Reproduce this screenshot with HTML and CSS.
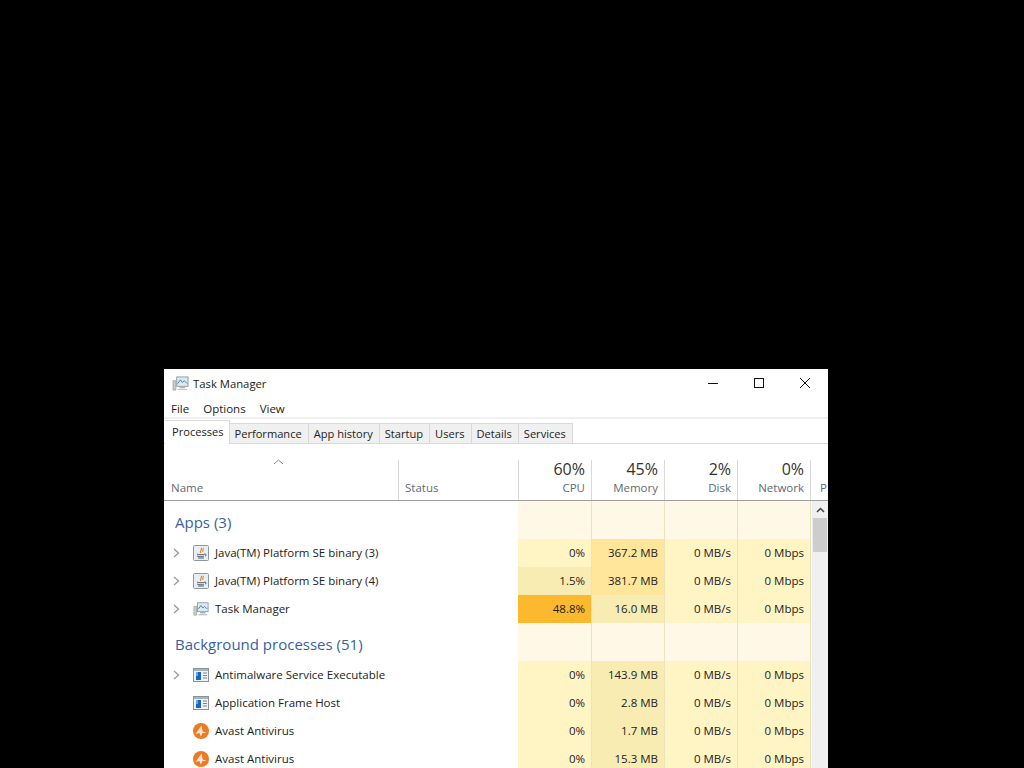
FILE: index.html
```html
<!DOCTYPE html>
<html>
<head>
  <meta charset="utf-8"/>
  <title>Task Manager</title>
  <link rel="stylesheet" href="styles.css">
</head>
<body>
  <svg class="defs" width="0" height="0">
    <symbol id="tm" viewBox="0 0 18 16">
      <rect x="5" y="1" width="12" height="10" fill="#dcebf3" stroke="#8a9aa3"/>
      <path d="M6 8l3-4 2 3 2-2 3 3" fill="none" stroke="#4a7f96"/>
      <path d="M1 5h3v10H1z" fill="#c9cfc9" stroke="#8f9a8f" stroke-width=".7"/>
      <path d="M8 11h6v2H8zM6 14h10v1H6z" fill="#a9b2b6"/>
    </symbol>
    <symbol id="java" viewBox="0 0 16 16">
      <rect x=".5" y=".5" width="15" height="15" rx="1" fill="#e9eef2" stroke="#8d979e"/>
      <path d="M8 3c2 1-2 3 0 5M10 3c1 1-1 2 0 4" fill="none" stroke="#d08a2c" stroke-width="1.1"/>
      <path d="M4 9c2 1 6 1 8 0M4 11c2 1 6 1 7 0M5 13h6M12 9c1.500 0 1.500 2 0 2" fill="none" stroke="#53636e"/>
    </symbol>
    <symbol id="svc" viewBox="0 0 16 14">
      <rect x=".5" y=".5" width="15" height="13" fill="#f1f2f3" stroke="#87929a"/>
      <path d="M1 1h14v2H1z" fill="#a9b3bb"/>
      <path d="M3 4h5v8H3z" fill="#1668c4"/>
      <path d="M3 4h2v4H3z" fill="#6aa6e4"/>
      <path d="M10 5h4M10 7.500h4M10 10h4" stroke="#7b858c"/>
    </symbol>
    <symbol id="avast" viewBox="0 0 16 16">
      <circle cx="8" cy="8" r="8" fill="#ee7a24"/>
      <path d="M2.500 11L8.500 2.500l1.200 6 3.800 1.200-4.300.6-1.200 3.500-1.500-3.800z" fill="#fbe6d4"/>
    </symbol>
  </svg>

  <div class="window">
    <div class="titlebar">
      <svg class="title-icon"><use href="#tm"/></svg>
      <span class="title-text">Task Manager</span>
      <div class="controls">
        <svg width="12" height="12" viewBox="0 0 12 12"><path d="M1 6.500h10" stroke="#111"/></svg>
        <svg width="12" height="12" viewBox="0 0 12 12"><rect x="1.500" y="1.500" width="9" height="9" fill="none" stroke="#111"/></svg>
        <svg width="12" height="12" viewBox="0 0 12 12"><path d="M1 1l10 10M11 1L1 11" stroke="#111"/></svg>
      </div>
    </div>

    <div class="menubar">
      <span>File</span>
      <span>Options</span>
      <span>View</span>
    </div>

    <div class="tabs">
      <span class="tab active">Processes</span>
      <span class="tab">Performance</span>
      <span class="tab">App history</span>
      <span class="tab">Startup</span>
      <span class="tab">Users</span>
      <span class="tab">Details</span>
      <span class="tab">Services</span>
    </div>

    <div class="table">
      <div class="head">
        <div class="hcell name-head">
          <svg class="sort" width="11" height="6" viewBox="0 0 11 6"><path d="M1 5l4.500-4L10 5" fill="none" stroke="#8a8a8a"/></svg>
          <span class="hlabel">Name</span>
        </div>
        <div class="hcell status-head"><span class="hlabel">Status</span></div>
        <div class="hcell num"><span class="pct">60%</span><span class="hlabel">CPU</span></div>
        <div class="hcell num"><span class="pct">45%</span><span class="hlabel">Memory</span></div>
        <div class="hcell num"><span class="pct">2%</span><span class="hlabel">Disk</span></div>
        <div class="hcell num"><span class="pct">0%</span><span class="hlabel">Network</span></div>
        <div class="hcell power"><span class="hlabel">P</span></div>
      </div>

      <div class="row group">
        <div class="name group-name">Apps (3)</div>
        <div class="status"></div>
        <div class="cell"></div><div class="cell"></div><div class="cell"></div><div class="cell"></div>
      </div>
      <div class="row">
        <div class="name"><svg class="chev" width="7" height="10" viewBox="0 0 7 10"><path d="M1 1l4.500 4L1 9" fill="none" stroke="#9a9a9a" stroke-width="1.300"/></svg><svg class="icon"><use href="#java"/></svg><span>Java(TM) Platform SE binary (3)</span></div>
        <div class="status"></div>
        <div class="cell h1">0%</div><div class="cell h3">367.2 MB</div><div class="cell h1">0 MB/s</div><div class="cell h1">0 Mbps</div>
      </div>
      <div class="row">
        <div class="name"><svg class="chev" width="7" height="10" viewBox="0 0 7 10"><path d="M1 1l4.500 4L1 9" fill="none" stroke="#9a9a9a" stroke-width="1.300"/></svg><svg class="icon"><use href="#java"/></svg><span>Java(TM) Platform SE binary (4)</span></div>
        <div class="status"></div>
        <div class="cell h2">1.5%</div><div class="cell h3">381.7 MB</div><div class="cell h1">0 MB/s</div><div class="cell h1">0 Mbps</div>
      </div>
      <div class="row">
        <div class="name"><svg class="chev" width="7" height="10" viewBox="0 0 7 10"><path d="M1 1l4.500 4L1 9" fill="none" stroke="#9a9a9a" stroke-width="1.300"/></svg><svg class="icon"><use href="#tm"/></svg><span>Task Manager</span></div>
        <div class="status"></div>
        <div class="cell hot">48.8%</div><div class="cell h2">16.0 MB</div><div class="cell h1">0 MB/s</div><div class="cell h1">0 Mbps</div>
      </div>

      <div class="row group">
        <div class="name group-name">Background processes (51)</div>
        <div class="status"></div>
        <div class="cell"></div><div class="cell"></div><div class="cell"></div><div class="cell"></div>
      </div>
      <div class="row">
        <div class="name"><svg class="chev" width="7" height="10" viewBox="0 0 7 10"><path d="M1 1l4.500 4L1 9" fill="none" stroke="#9a9a9a" stroke-width="1.300"/></svg><svg class="icon"><use href="#svc"/></svg><span>Antimalware Service Executable</span></div>
        <div class="status"></div>
        <div class="cell h1">0%</div><div class="cell h2">143.9 MB</div><div class="cell h1">0 MB/s</div><div class="cell h1">0 Mbps</div>
      </div>
      <div class="row">
        <div class="name"><span class="chev-space"></span><svg class="icon"><use href="#svc"/></svg><span>Application Frame Host</span></div>
        <div class="status"></div>
        <div class="cell h1">0%</div><div class="cell h2">2.8 MB</div><div class="cell h1">0 MB/s</div><div class="cell h1">0 Mbps</div>
      </div>
      <div class="row">
        <div class="name"><span class="chev-space"></span><svg class="icon"><use href="#avast"/></svg><span>Avast Antivirus</span></div>
        <div class="status"></div>
        <div class="cell h1">0%</div><div class="cell h2">1.7 MB</div><div class="cell h1">0 MB/s</div><div class="cell h1">0 Mbps</div>
      </div>
      <div class="row">
        <div class="name"><span class="chev-space"></span><svg class="icon"><use href="#avast"/></svg><span>Avast Antivirus</span></div>
        <div class="status"></div>
        <div class="cell h1">0%</div><div class="cell h2">15.3 MB</div><div class="cell h1">0 MB/s</div><div class="cell h1">0 Mbps</div>
      </div>

      <div class="scrollbar">
        <svg class="scroll-up" width="9" height="6" viewBox="0 0 9 6"><path d="M1 5l3.500-3.500L8 5" fill="none" stroke="#444" stroke-width="1.500"/></svg>
        <div class="thumb"></div>
      </div>
    </div>
  </div>
</body>
</html>
```
FILE: styles.css
```css
html, body {
  margin: 0;
  height: 100%;
  overflow: hidden;
}
body {
  background: #000;
  font-family: "Open Sans", "Noto Sans", sans-serif;
  font-size: 11.5px;
  color: #222;
}
.defs {
  position: absolute;
}
.window {
  position: absolute;
  left: 164px;
  top: 369px;
  width: 664px;
  height: 399px;
  background: #fff;
  overflow: hidden;
}

/* title and menu */
.titlebar {
  display: flex;
  align-items: center;
  height: 28px;
  padding-left: 8px;
}
.title-icon {
  width: 17px;
  height: 15px;
  margin-right: 4px;
}
.title-text {
  font-size: 11.3px;
}
.controls {
  display: flex;
  gap: 34px;
  margin-left: auto;
  margin-right: 17px;
  margin-top: -1px;
}
.menubar {
  display: flex;
  gap: 14px;
  height: 18px;
  align-items: center;
  padding-left: 7px;
  padding-top: 2px;
  border-bottom: 2px solid #f0f0f0;
}

/* tabs */
.tabs {
  display: flex;
  align-items: flex-end;
  height: 24px;
  padding-left: 1px;
  border-bottom: 1px solid #d9d9d9;
  font-size: 11.1px;
}
.tab {
  display: flex;
  align-items: center;
  height: 20px;
  padding: 0 6px 0 5px;
  background: #f0f0f0;
  border: 1px solid #d9d9d9;
  border-bottom: none;
  border-left: none;
  box-sizing: border-box;
}
.tab.active {
  height: 24px;
  padding: 0 5px 3px 7px;
  background: #fff;
  margin-bottom: -1px;
  position: relative;
}

/* process table */
.table {
  position: relative;
}
.head, .row {
  display: grid;
  grid-template-columns: 235px 120px 73px 73px 73px 73px;
}
.head {
  grid-template-columns: 235px 120px 73px 73px 73px 73px 17px;
  grid-template-rows: 40px;
  height: 40px;
  margin-top: 16px;
  border-bottom: 1px solid #a0a0a0;
}
.hcell {
  position: relative;
  display: flex;
  flex-direction: column;
  justify-content: flex-end;
  border-right: 1px solid #d9d9d9;
  box-sizing: border-box;
}
.hlabel {
  color: #5f6b76;
  line-height: 16px;
  padding-bottom: 4px;
}
.name-head {
  padding-left: 7px;
}
.status-head {
  padding-left: 6px;
}
.num {
  align-items: flex-end;
  padding-right: 6px;
}
.pct {
  font-size: 16px;
  line-height: 18px;
  margin-bottom: 2px;
  color: #333;
}
.power {
  border-right: none;
  padding-left: 9px;
}
.sort {
  position: absolute;
  left: 109px;
  top: -1px;
}

.row {
  height: 28px;
}
.row.group {
  height: 38px;
}
.name {
  display: flex;
  align-items: center;
  padding-left: 9px;
  padding-bottom: 1px;
}
.chev, .chev-space {
  width: 7px;
  margin-right: 13px;
  flex: none;
}
.icon {
  width: 16px;
  height: 16px;
  margin-right: 6px;
  flex: none;
}
.group-name {
  padding-left: 11px;
  padding-bottom: 0;
  padding-top: 3px;
  font-size: 15px;
  color: #3a5f9f;
}
.cell {
  display: flex;
  align-items: center;
  justify-content: flex-end;
  padding-right: 6px;
  padding-bottom: 1px;
  background: #fff8e6;
  border-right: 1px solid #ece3bd;
  box-sizing: border-box;
}
.status + .cell {
  margin-left: -1px;
}
.h1 {
  background: #fff4c4;
}
.h2 {
  background: #f9ecb2;
}
.h3 {
  background: #ffe69b;
}
.hot {
  background: #fdb92d;
}

.scrollbar {
  position: absolute;
  right: 0;
  top: 41px;
  bottom: -400px;
  width: 16px;
  background: #f0f0f0;
}
.scroll-up {
  display: block;
  margin: 6px auto 0;
}
.thumb {
  height: 34px;
  margin: 5px 1px 0;
  background: #cdcdcd;
}
```
